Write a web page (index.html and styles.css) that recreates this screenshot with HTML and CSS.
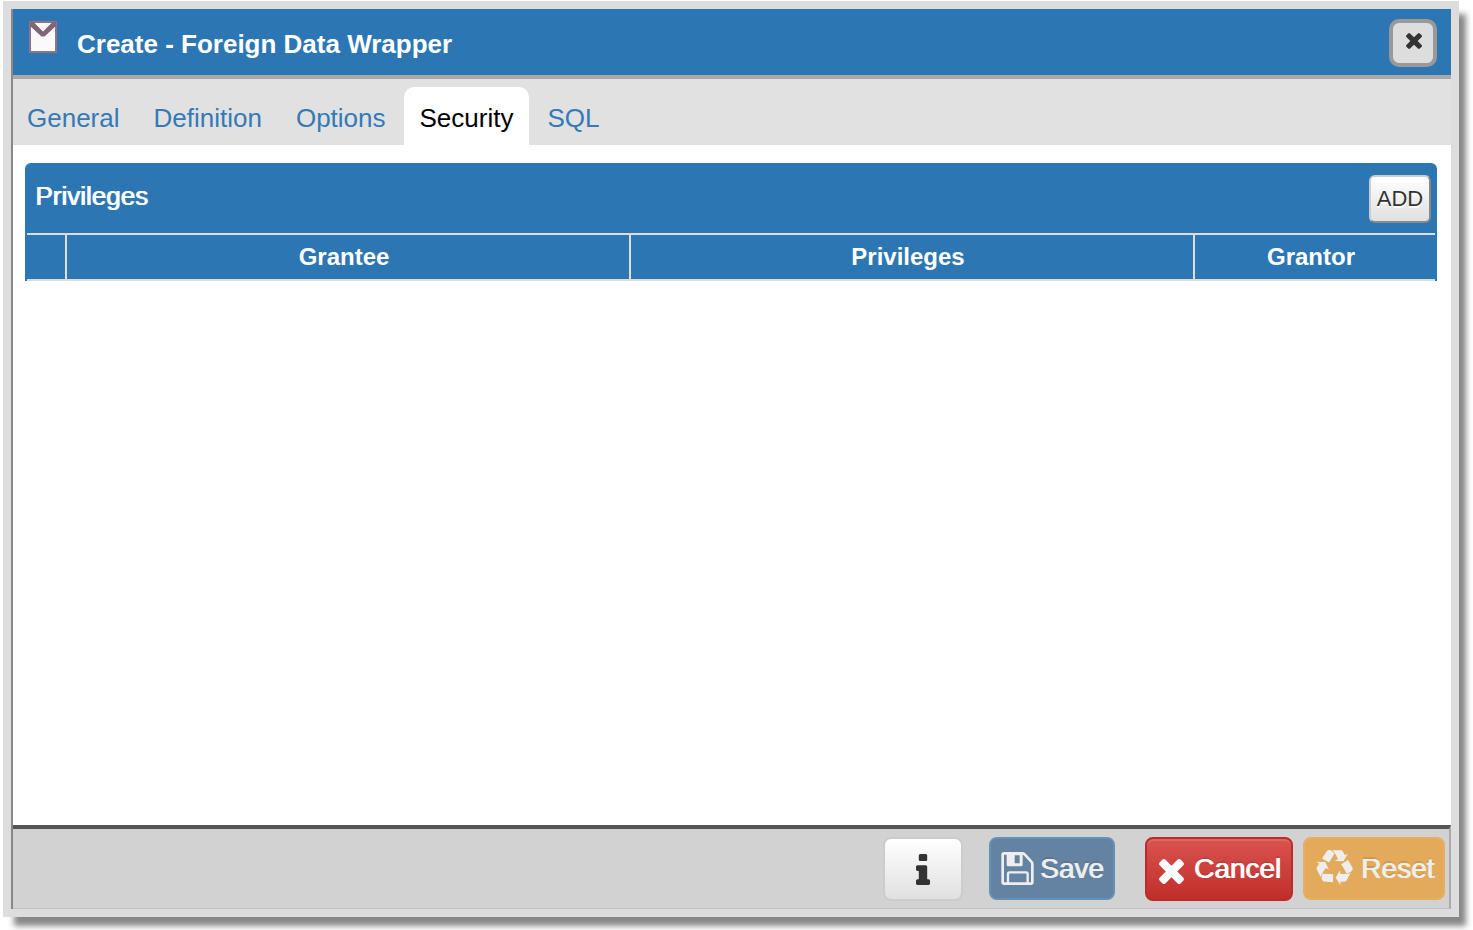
FILE: index.html
```html
<!DOCTYPE html>
<html lang="en">
<head>
<meta charset="utf-8">
<title>Create - Foreign Data Wrapper</title>
<link rel="stylesheet" href="styles.css">
</head>
<body>
<main class="dialog" role="dialog" aria-labelledby="dialog-title">
  <div class="dialog-body">
    <header class="dialog-header">
      <svg class="wrapper-icon" viewBox="0 0 28 32" aria-hidden="true">
        <rect x="1" y="1" width="26" height="30" fill="#fbfafb" stroke="#927385" stroke-width="2"/>
        <path d="M1 1h4.500v1L14 10.500 22.500 2V1H27v4L15.500 15.500h-3L1 5z" fill="#806579"/>
      </svg>
      <h1 class="dialog-title" id="dialog-title">Create - Foreign Data Wrapper</h1>
      <button class="close-button" type="button" aria-label="Close">
        <svg class="close-icon" viewBox="302 366 1188 1188" aria-hidden="true"><path fill="currentColor" d="M1490 1322q0 40-28 68l-136 136q-28 28-68 28t-68-28l-294-294-294 294q-28 28-68 28t-68-28l-136-136q-28-28-28-68t28-68l294-294-294-294q-28-28-28-68t28-68l136-136q28-28 68-28t68 28l294 294 294-294q28-28 68-28t68 28l136 136q28 28 28 68t-28 68l-294 294 294 294q28 28 28 68z"/></svg>
      </button>
    </header>

    <nav class="tabs">
      <a class="tab" href="#general">General</a>
      <a class="tab" href="#definition">Definition</a>
      <a class="tab" href="#options">Options</a>
      <a class="tab tab-active" href="#security" aria-current="page">Security</a>
      <a class="tab" href="#sql">SQL</a>
    </nav>

    <section class="content" id="security">
      <div class="grid">
        <div class="grid-header">
          <h2 class="grid-title">Privileges</h2>
          <button class="add-button" type="button">ADD</button>
        </div>
        <table class="grid-table">
          <colgroup>
            <col class="col-action"><col><col><col class="col-grantor">
          </colgroup>
          <thead>
            <tr><th></th><th>Grantee</th><th>Privileges</th><th>Grantor</th></tr>
          </thead>
        </table>
      </div>
    </section>

    <footer class="dialog-footer">
      <button class="button button-info" type="button" aria-label="Information">
        <svg class="info-icon" viewBox="576 128 640 1408" aria-hidden="true"><path fill="currentColor" d="M1216 1344v128q0 26-19 45t-45 19h-512q-26 0-45-19t-19-45v-128q0-26 19-45t45-19h64v-384h-64q-26 0-45-19t-19-45v-128q0-26 19-45t45-19h384q26 0 45 19t19 45v576h64q26 0 45 19t19 45zm-128-1152v192q0 26-19 45t-45 19h-256q-26 0-45-19t-19-45v-192q0-26 19-45t45-19h256q26 0 45 19t19 45z"/></svg>
      </button>
      <button class="button button-save" type="button">
        <svg class="save-icon" viewBox="0 0 97 99" aria-hidden="true">
          <path d="M8 4h55q4 0 7 3l20 22q3 3 3 7v55q0 4-4 4H8q-4 0-4-4V8q0-4 4-4z" fill="none" stroke="currentColor" stroke-width="8"/>
          <path fill="currentColor" fill-rule="evenodd" d="M16 4h48v34q0 5-5 5H21q-5 0-5-5zM40 10v24h15V10z"/>
          <path d="M20 95V66q0-5 5-5h49q5 0 5 5v29" fill="none" stroke="currentColor" stroke-width="7"/>
        </svg>
        Save
      </button>
      <button class="button button-cancel" type="button">
        <svg class="cancel-icon" viewBox="302 366 1188 1188" aria-hidden="true"><path fill="currentColor" d="M1490 1322q0 40-28 68l-136 136q-28 28-68 28t-68-28l-294-294-294 294q-28 28-68 28t-68-28l-136-136q-28-28-28-68t28-68l294-294-294-294q-28-28-28-68t28-68l136-136q28-28 68-28t68 28l294 294 294-294q28-28 68-28t68 28l136 136q28 28 28 68t-28 68l-294 294 294 294q28 28 28 68z"/></svg>
        Cancel
      </button>
      <button class="button button-reset" type="button">
        <svg class="reset-icon" viewBox="0 0 1792 1792" aria-hidden="true"><path fill="currentColor" d="M836 1169l-15 368-2 22-420-29q-36-3-67-31.500t-47-65.500q-11-27-14.500-55t4-65 12-55 21.500-64 19-53q78 12 509 28zm-387-586l180 379-147-92q-63 72-111.500 144.500t-72.500 125-39.500 94.500-18.500 63l-4 21-190-357q-17-26-18-56t6-47l8-18q35-63 114-188l-140-86zm1231 517l-188 359q-12 29-36.500 46.500t-43.500 20.500l-18 4q-71 7-219 12l8 164-230-367 211-362 7 173q170 16 283 5t170-33zm-785-924q-47 63-265 435l-317-187-19-12 225-356q20-31 60-45t80-10q24 2 48.500 12t42 21 41.500 33 36 34.500 36 39.500 32 35zm655 307l212 363q18 37 12.500 76t-27.500 74q-13 20-33 37t-38 28-48.500 22-47 16-51.500 14-46 12q-34-72-265-436l313-195zm-143-226l142-83-220 373-419-20 151-86q-34-89-75-166t-75.500-123.500-64.500-80-47-46.500l-17-13 405 1q31-3 58 10.500t39 28.500l11 15q39 61 112 190z"/></svg>
        Reset
      </button>
    </footer>
  </div>
</main>
</body>
</html>
```
FILE: styles.css
```css
* {
  box-sizing: border-box;
}

body {
  margin: 0;
  padding: 1px 14px 13px 3px;
  min-height: 100vh;
  display: flex;
  background: #fff;
  color: #333;
  font-family: "Liberation Sans", Arial, sans-serif;
  font-size: 26px;
  line-height: 30px;
}

button {
  font-family: inherit;
  cursor: pointer;
}

svg {
  display: block;
  flex: none;
}

.dialog {
  flex: 1;
  display: flex;
  padding: 8px;
  background: #ddd;
  box-shadow: 9px 11px 6px -2px #888;
}

.dialog-body {
  flex: 1;
  display: flex;
  flex-direction: column;
  border-left: 2px solid #888;
  background: #fff;
}

.dialog-header {
  display: flex;
  align-items: flex-start;
  padding: 10px 14px 8px 16px;
  border-bottom: 4px solid #a9a9a9;
  background: #2c76b4;
  color: #fff;
}

.wrapper-icon {
  width: 28px;
  height: 32px;
  margin-top: 2px;
}

.dialog-title {
  flex: 1;
  margin: 10px 0 0 20px;
  font-size: 26px;
  font-weight: 700;
}

.close-button {
  display: flex;
  align-items: center;
  justify-content: center;
  width: 48px;
  height: 48px;
  padding: 0 0 4px 2px;
  border: 4px solid #999;
  border-radius: 10px;
  background: #ddd;
  color: #333;
}

.close-icon {
  width: 16px;
  height: 16px;
}

.tabs {
  display: flex;
  gap: 2px;
  padding-top: 8px;
  background: #e1e1e1;
}

.tab {
  padding: 16px 16px 12px;
  border-radius: 10px 10px 0 0;
  color: #337ab7;
  text-decoration: none;
}

.tab:first-child {
  padding-left: 14px;
}

.tab-active {
  background: #fff;
  color: #000;
}

.content {
  flex: 1;
  padding: 18px 14px 18px 12px;
}

.grid {
  padding: 0 2px;
  border-radius: 6px 6px 0 0;
  background: #2c76b4;
  color: #fff;
}

.grid-header {
  display: flex;
  align-items: flex-start;
  justify-content: space-between;
  padding: 12px 4px 10px 8px;
}

.grid-title {
  margin: 6px 0 0;
  font-size: 26px;
  font-weight: 400;
  text-shadow: 1px 0 0 currentColor;
}

.add-button {
  width: 62px;
  height: 48px;
  padding: 0;
  border: 2px solid;
  border-color: #ccc #888 #888 #ccc;
  border-radius: 6px;
  background: linear-gradient(#fff, #e0e0e0);
  color: #333;
  font-size: 22px;
  text-shadow: 0 2px 0 #fff;
}

.grid-table {
  width: 100%;
  table-layout: fixed;
  border-spacing: 0;
  border-top: 2px solid #ddd;
  border-bottom: 2px solid #ddd;
}

.grid-table th {
  height: 44px;
  padding: 0 8px 0 0;
  border-right: 2px solid #ddd;
  font-size: 24px;
  line-height: 28px;
}

.grid-table th:last-child {
  border-right: 0;
}

.col-action {
  width: 40px;
}

.col-grantor {
  width: 240px;
}

.dialog-footer {
  display: flex;
  justify-content: flex-end;
  padding: 8px 4px 7px;
  border-top: 4px solid #555;
  border-right: 2px solid #aaa;
  border-bottom: 1px solid #c0c0c0;
  background: #d2d2d2;
}

.button {
  display: flex;
  align-items: center;
  height: 64px;
  padding: 0 10px;
  border: 2px solid;
  border-radius: 8px;
  color: #fff;
  font-size: 28px;
  line-height: 32px;
  text-shadow: 1px 0 0 currentColor, 0 -2px 0 rgba(0, 0, 0, 0.1);
}

.button-info {
  justify-content: center;
  width: 80px;
  margin-right: 26px;
  border-color: #ccc;
  background: linear-gradient(#fff, #e0e0e0);
  color: #333;
}

.info-icon {
  width: 14px;
  height: 31px;
}

.button-save {
  gap: 6px;
  height: 63px;
  margin-right: 30px;
  padding-right: 9px;
  border-color: #6590b8;
  background: #6483a3;
  color: #eee;
}

.save-icon {
  width: 33px;
  height: 33px;
}

.button-cancel {
  gap: 10px;
  margin-right: 10px;
  padding-left: 12px;
  border-color: #b92c28;
  background: linear-gradient(#d9534f, #c12e2a);
  box-shadow: inset 0 2px 0 #dd6663;
}

.cancel-icon {
  width: 25px;
  height: 25px;
  margin-top: 4px;
}

.button-reset {
  gap: 8px;
  height: 63px;
  padding-left: 11px;
  padding-right: 9px;
  border-color: #e6ae60;
  background: #e2aa5a;
  color: #eee;
}

.reset-icon {
  width: 37px;
  height: 37px;
}
```
